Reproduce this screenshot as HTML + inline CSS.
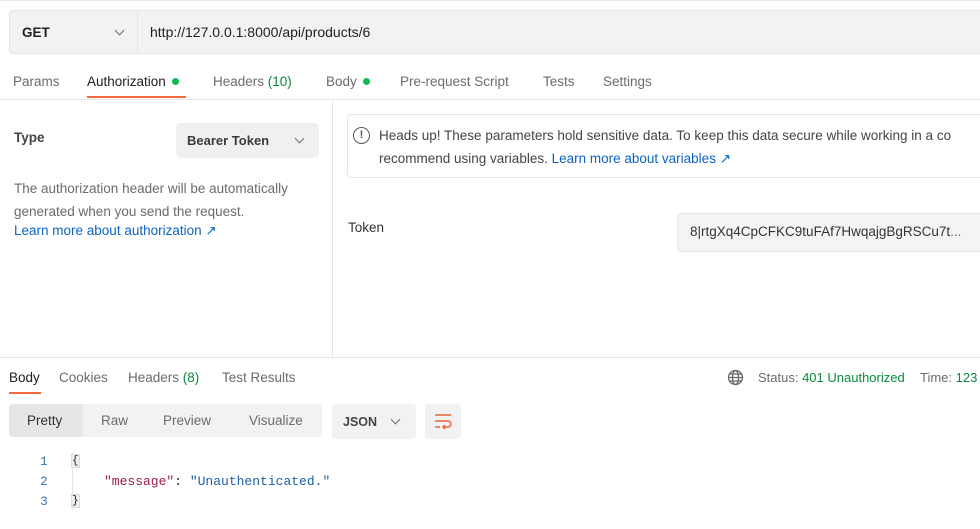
<!DOCTYPE html>
<html><head><style>
*{box-sizing:border-box;margin:0;padding:0}
body{width:980px;height:529px;background:#fff;font-family:"Liberation Sans",sans-serif;font-size:13.5px;color:#212121;position:relative;overflow:hidden}
.a{position:absolute;white-space:nowrap}
.g{color:#6b6b6b}
.link{color:#0b64c2}
.dot{display:inline-block;width:7px;height:7px;border-radius:50%;background:#0cbb52;margin-left:6px;vertical-align:1px}
.gr{color:#098a3d}
.chev{display:inline-block;width:7px;height:7px;border-right:1.3px solid #6b6b6b;border-bottom:1.3px solid #6b6b6b;transform:rotate(45deg)}
.mono{font-family:"Liberation Mono",monospace;font-size:13px}
</style></head><body>
<div class="a" style="left:0;top:0;width:980px;height:1px;background:#e8e8e8"></div>
<div class="a" style="left:9px;top:10px;width:980px;height:44px;background:#f2f2f2;border:1px solid #e6e6e6;border-radius:4px"></div>
<div class="a" style="left:137px;top:11px;width:1px;height:42px;background:#e3e3e3"></div>
<div class="a" style="left:22px;top:25px;font-weight:bold;font-size:13.5px">GET</div>
<div class="a chev" style="left:116px;top:27px"></div>
<div class="a" style="left:150px;top:24px;font-size:14px">http://127.0.0.1:8000/api/products/6</div>

<div class="a g" style="left:13px;top:74px">Params</div>
<div class="a" style="left:87px;top:74px">Authorization<span class="dot"></span></div>
<div class="a g" style="left:213px;top:74px">Headers <span class="gr">(10)</span></div>
<div class="a g" style="left:326px;top:74px">Body<span class="dot"></span></div>
<div class="a g" style="left:400px;top:74px">Pre-request Script</div>
<div class="a g" style="left:543px;top:74px">Tests</div>
<div class="a g" style="left:603px;top:74px">Settings</div>
<div class="a" style="left:87px;top:96px;width:99px;height:2px;background:#f26b3a"></div>
<div class="a" style="left:0;top:99px;width:980px;height:1px;background:#e6e6e6"></div>
<div class="a" style="left:332px;top:100px;width:1px;height:258px;background:#e6e6e6"></div>

<div class="a" style="left:14px;top:130px;font-weight:bold;color:#444">Type</div>
<div class="a" style="left:176px;top:123px;width:143px;height:35px;background:#f0f0f0;border-radius:4px"></div>
<div class="a" style="left:187px;top:133px;font-weight:bold;font-size:13px;color:#3a3a3a">Bearer Token</div>
<div class="a chev" style="left:296px;top:135px"></div>
<div class="a g" style="left:14px;top:181px">The authorization header will be automatically</div>
<div class="a g" style="left:14px;top:204px">generated when you send the request.</div>
<div class="a link" style="left:14px;top:223px">Learn more about authorization ↗</div>

<div class="a" style="left:347px;top:114px;width:640px;height:64px;border:1px solid #e6e6e6;border-radius:4px"></div>
<div class="a" style="left:353px;top:127px;width:17px;height:17px;border:1.4px solid #555;border-radius:50%;font-size:11px;font-weight:bold;text-align:center;line-height:14px;color:#555">!</div>
<div class="a" style="left:379px;top:128px;color:#444">Heads up! These parameters hold sensitive data. To keep this data secure while working in a co</div>
<div class="a" style="left:379px;top:151px;color:#444">recommend using variables. <span class="link">Learn more about variables ↗</span></div>

<div class="a" style="left:348px;top:220px;color:#333">Token</div>
<div class="a" style="left:677px;top:213px;width:310px;height:39px;background:#f4f4f4;border:1px solid #e6e6e6;border-radius:4px"></div>
<div class="a" style="left:690px;top:224px;color:#333">8|rtgXq4CpCFKC9tuFAf7HwqajgBgRSCu7t<span class="g">...</span></div>

<div class="a" style="left:0;top:357px;width:980px;height:1px;background:#e6e6e6"></div>
<div class="a" style="left:9px;top:370px">Body</div>
<div class="a g" style="left:59px;top:370px">Cookies</div>
<div class="a g" style="left:128px;top:370px">Headers <span class="gr">(8)</span></div>
<div class="a g" style="left:222px;top:370px">Test Results</div>
<div class="a" style="left:9px;top:392px;width:32px;height:2px;background:#f26b3a"></div>
<svg class="a" style="left:727px;top:369px" width="17" height="17" viewBox="0 0 17 17" fill="none" stroke="#666" stroke-width="1.3"><circle cx="8.5" cy="8.5" r="7"/><ellipse cx="8.5" cy="8.5" rx="3" ry="7"/><path d="M1.5 8.5h14M2.5 5h12M2.5 12h12"/></svg>
<div class="a g" style="left:758px;top:370px;font-size:13px">Status: <span class="gr">401 Unauthorized</span></div>
<div class="a g" style="left:920px;top:370px;font-size:13px">Time: <span class="gr">123</span></div>

<div class="a" style="left:9px;top:404px;width:313px;height:33px;background:#f2f2f2;border-radius:4px"></div>
<div class="a" style="left:9px;top:404px;width:74px;height:33px;background:#e6e6e6;border-radius:4px 0 0 4px"></div>
<div class="a" style="left:27px;top:413px;color:#333">Pretty</div>
<div class="a g" style="left:101px;top:413px">Raw</div>
<div class="a g" style="left:163px;top:413px">Preview</div>
<div class="a g" style="left:249px;top:413px">Visualize</div>
<div class="a" style="left:332px;top:404px;width:84px;height:35px;background:#f2f2f2;border-radius:4px"></div>
<div class="a" style="left:343px;top:415px;font-weight:bold;font-size:12.5px;color:#444">JSON</div>
<div class="a chev" style="left:392px;top:416px"></div>
<div class="a" style="left:425px;top:404px;width:36px;height:35px;background:#f2f2f2;border-radius:4px"></div>
<svg class="a" style="left:433px;top:412px" width="20" height="18" viewBox="0 0 20 18" fill="none" stroke="#e8613a" stroke-width="1.4"><path d="M2 3h16M2 9h13a3 3 0 0 1 0 6H10M12 13l-2 2 2 2M2 15h5"/></svg>

<div class="a mono" style="left:40px;top:454px;color:#3a78b5">1</div>
<div class="a mono" style="left:40px;top:474px;color:#3a78b5">2</div>
<div class="a mono" style="left:40px;top:494px;color:#3a78b5">3</div>
<div class="a" style="left:72px;top:452px;width:7px;height:58px;border-left:1px solid #e8e8e8"></div>
<div class="a mono" style="left:71px;top:454px;background:#eee;font-size:11px;border:1px solid #ddd">{</div>
<div class="a mono" style="left:71px;top:494px;background:#eee;font-size:11px;border:1px solid #ddd">}</div>
<div class="a mono" style="left:104px;top:474px"><span style="color:#a01a4a">"message"</span>: <span style="color:#1c5fa8">"Unauthenticated."</span></div>
</body></html>
